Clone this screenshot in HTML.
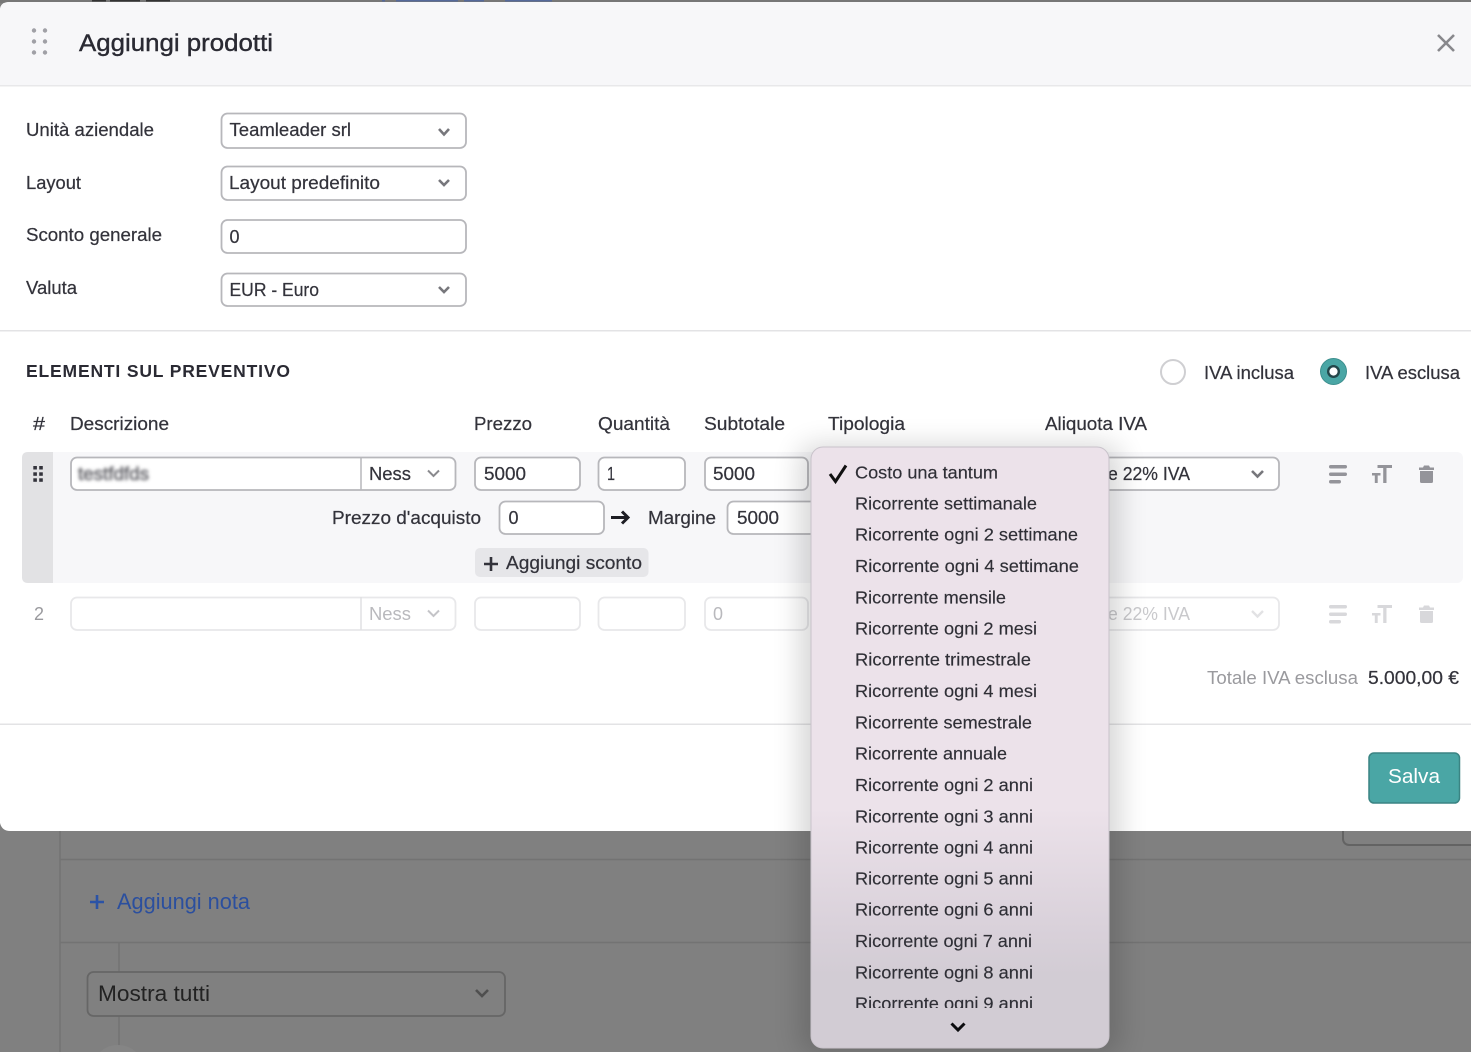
<!DOCTYPE html>
<html lang="it"><head><meta charset="utf-8"><title>Aggiungi prodotti</title>
<style>
html,body{margin:0;padding:0;background:#808080;width:1471px;height:1052px;overflow:hidden}
svg{display:block}
text{font-family:"Liberation Sans",Arial,sans-serif;font-size:18.8px;fill:#33333b;stroke:#33333b;stroke-width:.22px}
.f{fill:#fff;stroke:#b7b7bb;stroke-width:1.8}
.l{fill:#fff;stroke:#e8e8ea;stroke-width:1.8}
.c{fill:none;stroke:#77777c;stroke-width:2.6}
.g{fill:#b9b9bd;stroke:none}
.d{font-size:17.8px;fill:#2f2f36;stroke:#2f2f36;stroke-width:.15px}
.n{stroke:none}
</style></head><body>
<svg width="1471" height="1052" viewBox="0 0 1471 1052" xmlns="http://www.w3.org/2000/svg">
<defs>
<linearGradient id="dd" x1="0" y1="447" x2="0" y2="1048" gradientUnits="userSpaceOnUse">
<stop offset="0" stop-color="#ece2ea"/><stop offset=".6" stop-color="#ece2ea"/><stop offset=".8" stop-color="#d9d1da"/><stop offset=".88" stop-color="#d2ccd4"/><stop offset="1" stop-color="#d2ccd4"/>
</linearGradient>
<filter id="sh" x="-20%" y="-10%" width="140%" height="120%"><feGaussianBlur stdDeviation="14"/></filter>
<filter id="bl" x="-10%" y="-30%" width="120%" height="160%"><feGaussianBlur stdDeviation="1.700"/></filter>
<clipPath id="cl"><rect x="811" y="450" width="298" height="558"/></clipPath>
</defs>
<!-- background -->
<rect width="1471" height="1052" fill="#808080"/>
<rect width="1471" height="3" fill="#777"/>
<g fill="#333"><rect x="92" y="0" width="14" height="1.500"/><rect x="110" y="0" width="30" height="1.500"/><rect x="146" y="0" width="24" height="1.500"/></g>
<g fill="#55699a"><rect x="382" y="0" width="3" height="1.500"/><rect x="396" y="0" width="62" height="1.500"/><rect x="464" y="0" width="20" height="1.500"/><rect x="505" y="0" width="47" height="1.500"/></g>
<path d="M60 831V1052M60 859.500H1471M60 942.500H1471M119 942V972M119 1016V1052" stroke="#737373" stroke-width="1.500" fill="none"/>
<rect x="1343" y="820" width="140" height="25" rx="6" fill="none" stroke="#636363" stroke-width="2"/>
<path d="M90 902H104M97 895V909" stroke="#2b53a6" stroke-width="2.600"/>
<text class="n" x="117" y="909" textLength="133" lengthAdjust="spacingAndGlyphs" style="font-size:22px;fill:#2b4f9e">Aggiungi nota</text>
<rect x="87.500" y="972" width="417.500" height="44" rx="6" fill="#808080" stroke="#666" stroke-width="1.800"/>
<text class="n" x="98" y="1001" textLength="112" lengthAdjust="spacingAndGlyphs" style="font-size:22px;fill:#222">Mostra tutti</text>
<path d="M476 990l6 6 6-6" fill="none" stroke="#4f4f4f" stroke-width="2.600"/>
<circle cx="118" cy="1072" r="27" fill="#858585"/>
<!-- modal -->
<path d="M0 10Q0 2 10 2H1471V831H10Q2 831 0 823Z" fill="#fff"/>
<path d="M0 10Q0 2 10 2H1471V85H0Z" fill="#f7f7f9"/>
<rect y="85" width="1471" height="1.500" fill="#e8e8ea"/>
<g fill="#a0a0a6"><circle cx="34" cy="30.500" r="2.200"/><circle cx="45" cy="30.500" r="2.200"/><circle cx="34" cy="41.500" r="2.200"/><circle cx="45" cy="41.500" r="2.200"/><circle cx="34" cy="52.500" r="2.200"/><circle cx="45" cy="52.500" r="2.200"/></g>
<text x="79" y="51" textLength="194" lengthAdjust="spacingAndGlyphs" style="font-size:24.500px;fill:#2a2a33;stroke:#2a2a33;stroke-width:.4px">Aggiungi prodotti</text>
<path d="M1438 35l16 16M1454 35l-16 16" stroke="#88888c" stroke-width="2.600" fill="none"/>
<!-- form -->
<text x="26" y="136" textLength="128" lengthAdjust="spacingAndGlyphs">Unità aziendale</text>
<text x="26" y="189" textLength="55" lengthAdjust="spacingAndGlyphs">Layout</text>
<text x="26" y="241" textLength="136" lengthAdjust="spacingAndGlyphs">Sconto generale</text>
<text x="26" y="294" textLength="51" lengthAdjust="spacingAndGlyphs">Valuta</text>
<rect class="f" x="221.500" y="113.500" width="244.500" height="34.500" rx="6"/>
<rect class="f" x="221.500" y="166.500" width="244.500" height="33.500" rx="6"/>
<rect class="f" x="221.500" y="220" width="244.500" height="33" rx="6"/>
<rect class="f" x="221.500" y="273.500" width="244.500" height="32.500" rx="6"/>
<text x="229.500" y="136" textLength="121.500" lengthAdjust="spacingAndGlyphs">Teamleader srl</text>
<text x="229" y="189" textLength="151" lengthAdjust="spacingAndGlyphs">Layout predefinito</text>
<text x="229.500" y="243" textLength="10" lengthAdjust="spacingAndGlyphs">0</text>
<text x="229.500" y="296" textLength="89.500" lengthAdjust="spacingAndGlyphs">EUR - Euro</text>
<path class="c" d="M439 129l5 5.500 5-5.500M439 180l5 5 5-5M439 287l5 5 5-5"/>
<rect y="330" width="1471" height="1.500" fill="#e3e3e5"/>
<text x="26" y="377" textLength="264" style="font-size:17.500px;font-weight:700;fill:#2a2a33;stroke:none">ELEMENTI SUL PREVENTIVO</text>
<circle cx="1173" cy="372" r="12" fill="#fff" stroke="#cfcfd2" stroke-width="2"/>
<text x="1204" y="379" textLength="90" lengthAdjust="spacingAndGlyphs">IVA inclusa</text>
<circle cx="1333.500" cy="371.500" r="13" fill="#4aa6a5" stroke="#3d8f8e" stroke-width="1"/>
<circle cx="1333.500" cy="371.500" r="5.300" fill="#fff" stroke="#23464a" stroke-width="2.400"/>
<text x="1365" y="379" textLength="95" lengthAdjust="spacingAndGlyphs">IVA esclusa</text>
<!-- table header -->
<text x="33" y="430" textLength="12" lengthAdjust="spacingAndGlyphs">#</text>
<text x="70" y="430" textLength="99" lengthAdjust="spacingAndGlyphs">Descrizione</text>
<text x="474" y="430" textLength="58" lengthAdjust="spacingAndGlyphs">Prezzo</text>
<text x="598" y="430" textLength="72" lengthAdjust="spacingAndGlyphs">Quantità</text>
<text x="704" y="430" textLength="81" lengthAdjust="spacingAndGlyphs">Subtotale</text>
<text x="828" y="430" textLength="77" lengthAdjust="spacingAndGlyphs">Tipologia</text>
<text x="1045" y="430" textLength="102" lengthAdjust="spacingAndGlyphs">Aliquota IVA</text>
<!-- row 1 -->
<rect x="22" y="452" width="1441" height="131" rx="6" fill="#f7f7f9"/>
<path d="M28 452H53V583H28Q22 583 22 577V458Q22 452 28 452Z" fill="#e2e2e4"/>
<g fill="#33333b"><rect x="33.300" y="466" width="3.600" height="3.500"/><rect x="39.200" y="466" width="3.600" height="3.500"/><rect x="33.300" y="472.300" width="3.600" height="3.500"/><rect x="39.200" y="472.300" width="3.600" height="3.500"/><rect x="33.300" y="478.300" width="3.600" height="3.500"/><rect x="39.200" y="478.300" width="3.600" height="3.500"/></g>
<rect class="f" x="71" y="457.500" width="384.500" height="32.500" rx="6"/>
<path d="M361 457V490" stroke="#b7b7bb" stroke-width="1.500"/>
<text x="78" y="480" textLength="71" lengthAdjust="spacingAndGlyphs" filter="url(#bl)" style="fill:#66666c;stroke:#66666c;stroke-width:.6px">testfdfds</text>
<text x="369" y="480" textLength="42" lengthAdjust="spacingAndGlyphs">Ness</text>
<path d="M428 470.500l5.500 5.500 5.500-5.500" fill="none" stroke="#8a8a8e" stroke-width="2"/>
<rect class="f" x="475" y="457.500" width="105" height="32.500" rx="6"/>
<text x="484" y="480" textLength="42" lengthAdjust="spacingAndGlyphs">5000</text>
<rect class="f" x="598.500" y="457.500" width="86.500" height="32.500" rx="6"/>
<text x="607" y="480" textLength="8" lengthAdjust="spacingAndGlyphs">1</text>
<rect class="f" x="705" y="457.500" width="103" height="32.500" rx="6"/>
<text x="713" y="480" textLength="42" lengthAdjust="spacingAndGlyphs">5000</text>
<text x="332" y="524" textLength="149" lengthAdjust="spacingAndGlyphs">Prezzo d'acquisto</text>
<rect class="f" x="499.500" y="501.500" width="104.500" height="32.500" rx="6"/>
<text x="508.500" y="524" textLength="10" lengthAdjust="spacingAndGlyphs">0</text>
<path d="M611 517.500H627M622 511.500l6 6-6 6" fill="none" stroke="#1e1e24" stroke-width="3"/>
<text x="648" y="524" textLength="68" lengthAdjust="spacingAndGlyphs">Margine</text>
<rect class="f" x="727.500" y="501.500" width="100" height="32.500" rx="6"/>
<text x="737" y="524" textLength="42" lengthAdjust="spacingAndGlyphs">5000</text>
<rect x="475" y="548" width="173.500" height="29" rx="5" fill="#e6e6e9"/>
<path d="M484 564H498M491 557V571" stroke="#33333b" stroke-width="2.600"/>
<text x="506" y="569" textLength="136" lengthAdjust="spacingAndGlyphs">Aggiungi sconto</text>
<rect class="f" x="1080" y="457.500" width="199" height="32.500" rx="6"/>
<text x="1108" y="480" textLength="82" lengthAdjust="spacingAndGlyphs">e 22% IVA</text>
<path class="c" d="M1252 471l5.500 5.500 5.500-5.500"/>
<g fill="#94949a">
<rect x="1329" y="465" width="18" height="3.500" rx="1.700"/><rect x="1329" y="472.500" width="18" height="3.500" rx="1.700"/><rect x="1329" y="480" width="12" height="3.500" rx="1.700"/>
<path d="M1377.500 465H1392V468H1386.500V483H1383.200V468H1377.500ZM1372 473H1380.500V475.500H1377.700V483H1374.800V475.500H1372Z"/>
<path d="M1424 465.500H1429L1430 467.500H1434V470H1419V467.500H1423ZM1420 471H1433V481.500Q1433 483 1431.500 483H1421.500Q1420 483 1420 481.500Z"/>
</g>
<!-- row 2 -->
<text class="n" x="34" y="620" textLength="10" lengthAdjust="spacingAndGlyphs" style="fill:#9a9a9e">2</text>
<rect class="l" x="71" y="597.500" width="384.500" height="32.500" rx="6"/>
<path d="M361 597V630" stroke="#e0e0e2" stroke-width="1.500"/>
<text x="369" y="620" textLength="42" lengthAdjust="spacingAndGlyphs" class="g">Ness</text>
<path d="M428 610.500l5.500 5.500 5.500-5.500" fill="none" stroke="#c4c4c8" stroke-width="2"/>
<rect class="l" x="475" y="597.500" width="105" height="32.500" rx="6"/>
<rect class="l" x="598.500" y="597.500" width="86.500" height="32.500" rx="6"/>
<rect class="l" x="705" y="597.500" width="103" height="32.500" rx="6"/>
<text x="713" y="620" textLength="10" lengthAdjust="spacingAndGlyphs" class="g">0</text>
<rect class="l" x="1080" y="597.500" width="199" height="32.500" rx="6"/>
<text class="n" x="1108" y="620" textLength="82" lengthAdjust="spacingAndGlyphs" style="fill:#c9c9cc">e 22% IVA</text>
<path d="M1252 611l5.500 5.500 5.500-5.500" fill="none" stroke="#e2e2e4" stroke-width="2.400"/>
<g fill="#d8d8db">
<rect x="1329" y="605" width="18" height="3.500" rx="1.700"/><rect x="1329" y="612.500" width="18" height="3.500" rx="1.700"/><rect x="1329" y="620" width="12" height="3.500" rx="1.700"/>
<path d="M1377.500 605H1392V608H1386.500V623H1383.200V608H1377.500ZM1372 613H1380.500V615.500H1377.700V623H1374.800V615.500H1372Z"/>
<path d="M1424 605.500H1429L1430 607.500H1434V610H1419V607.500H1423ZM1420 611H1433V621.500Q1433 623 1431.500 623H1421.500Q1420 623 1420 621.500Z"/>
</g>
<!-- totals -->
<text class="n" x="1207" y="684" textLength="151" lengthAdjust="spacingAndGlyphs" style="fill:#9a9a9e">Totale IVA esclusa</text>
<text x="1368" y="684" textLength="91" lengthAdjust="spacingAndGlyphs">5.000,00 €</text>
<rect y="723.500" width="1471" height="1.500" fill="#e3e3e5"/>
<rect x="1369" y="753" width="90.500" height="50" rx="5" fill="#4aa6a5" stroke="#3a8483" stroke-width="1.500"/>
<text class="n" x="1388" y="783" textLength="52" lengthAdjust="spacingAndGlyphs" style="font-size:20.500px;fill:#fff">Salva</text>
<!-- dropdown -->
<rect x="800" y="445" width="320" height="610" rx="14" fill="#000" opacity=".16" filter="url(#sh)"/>
<rect x="811" y="447" width="298" height="601" rx="12" fill="url(#dd)" stroke="#c9c3cb" stroke-width="1"/>
<path d="M830 474l5.500 7.500L846 465.500" fill="none" stroke="#111" stroke-width="3"/>
<g clip-path="url(#cl)"><g transform="translate(0,-.5)">
<text class="d" x="855" y="479" textLength="143" lengthAdjust="spacingAndGlyphs">Costo una tantum</text>
<text class="d" x="855" y="510" textLength="182" lengthAdjust="spacingAndGlyphs">Ricorrente settimanale</text>
<text class="d" x="855" y="541" textLength="223" lengthAdjust="spacingAndGlyphs">Ricorrente ogni 2 settimane</text>
<text class="d" x="855" y="572.500" textLength="224" lengthAdjust="spacingAndGlyphs">Ricorrente ogni 4 settimane</text>
<text class="d" x="855" y="604" textLength="151" lengthAdjust="spacingAndGlyphs">Ricorrente mensile</text>
<text class="d" x="855" y="635" textLength="182" lengthAdjust="spacingAndGlyphs">Ricorrente ogni 2 mesi</text>
<text class="d" x="855" y="666" textLength="176" lengthAdjust="spacingAndGlyphs">Ricorrente trimestrale</text>
<text class="d" x="855" y="697.500" textLength="182" lengthAdjust="spacingAndGlyphs">Ricorrente ogni 4 mesi</text>
<text class="d" x="855" y="729" textLength="177" lengthAdjust="spacingAndGlyphs">Ricorrente semestrale</text>
<text class="d" x="855" y="760" textLength="152" lengthAdjust="spacingAndGlyphs">Ricorrente annuale</text>
<text class="d" x="855" y="791.500" textLength="178" lengthAdjust="spacingAndGlyphs">Ricorrente ogni 2 anni</text>
<text class="d" x="855" y="823" textLength="178" lengthAdjust="spacingAndGlyphs">Ricorrente ogni 3 anni</text>
<text class="d" x="855" y="854" textLength="178" lengthAdjust="spacingAndGlyphs">Ricorrente ogni 4 anni</text>
<text class="d" x="855" y="885" textLength="178" lengthAdjust="spacingAndGlyphs">Ricorrente ogni 5 anni</text>
<text class="d" x="855" y="916" textLength="178" lengthAdjust="spacingAndGlyphs">Ricorrente ogni 6 anni</text>
<text class="d" x="855" y="947.500" textLength="177" lengthAdjust="spacingAndGlyphs">Ricorrente ogni 7 anni</text>
<text class="d" x="855" y="979" textLength="178" lengthAdjust="spacingAndGlyphs">Ricorrente ogni 8 anni</text>
<text class="d" x="855" y="1010" textLength="178" lengthAdjust="spacingAndGlyphs">Ricorrente ogni 9 anni</text>
</g></g>
<path d="M951.500 1023.500l6.500 6.500 6.500-6.500" fill="none" stroke="#0c0c0f" stroke-width="3"/>
</svg>
</body></html>
